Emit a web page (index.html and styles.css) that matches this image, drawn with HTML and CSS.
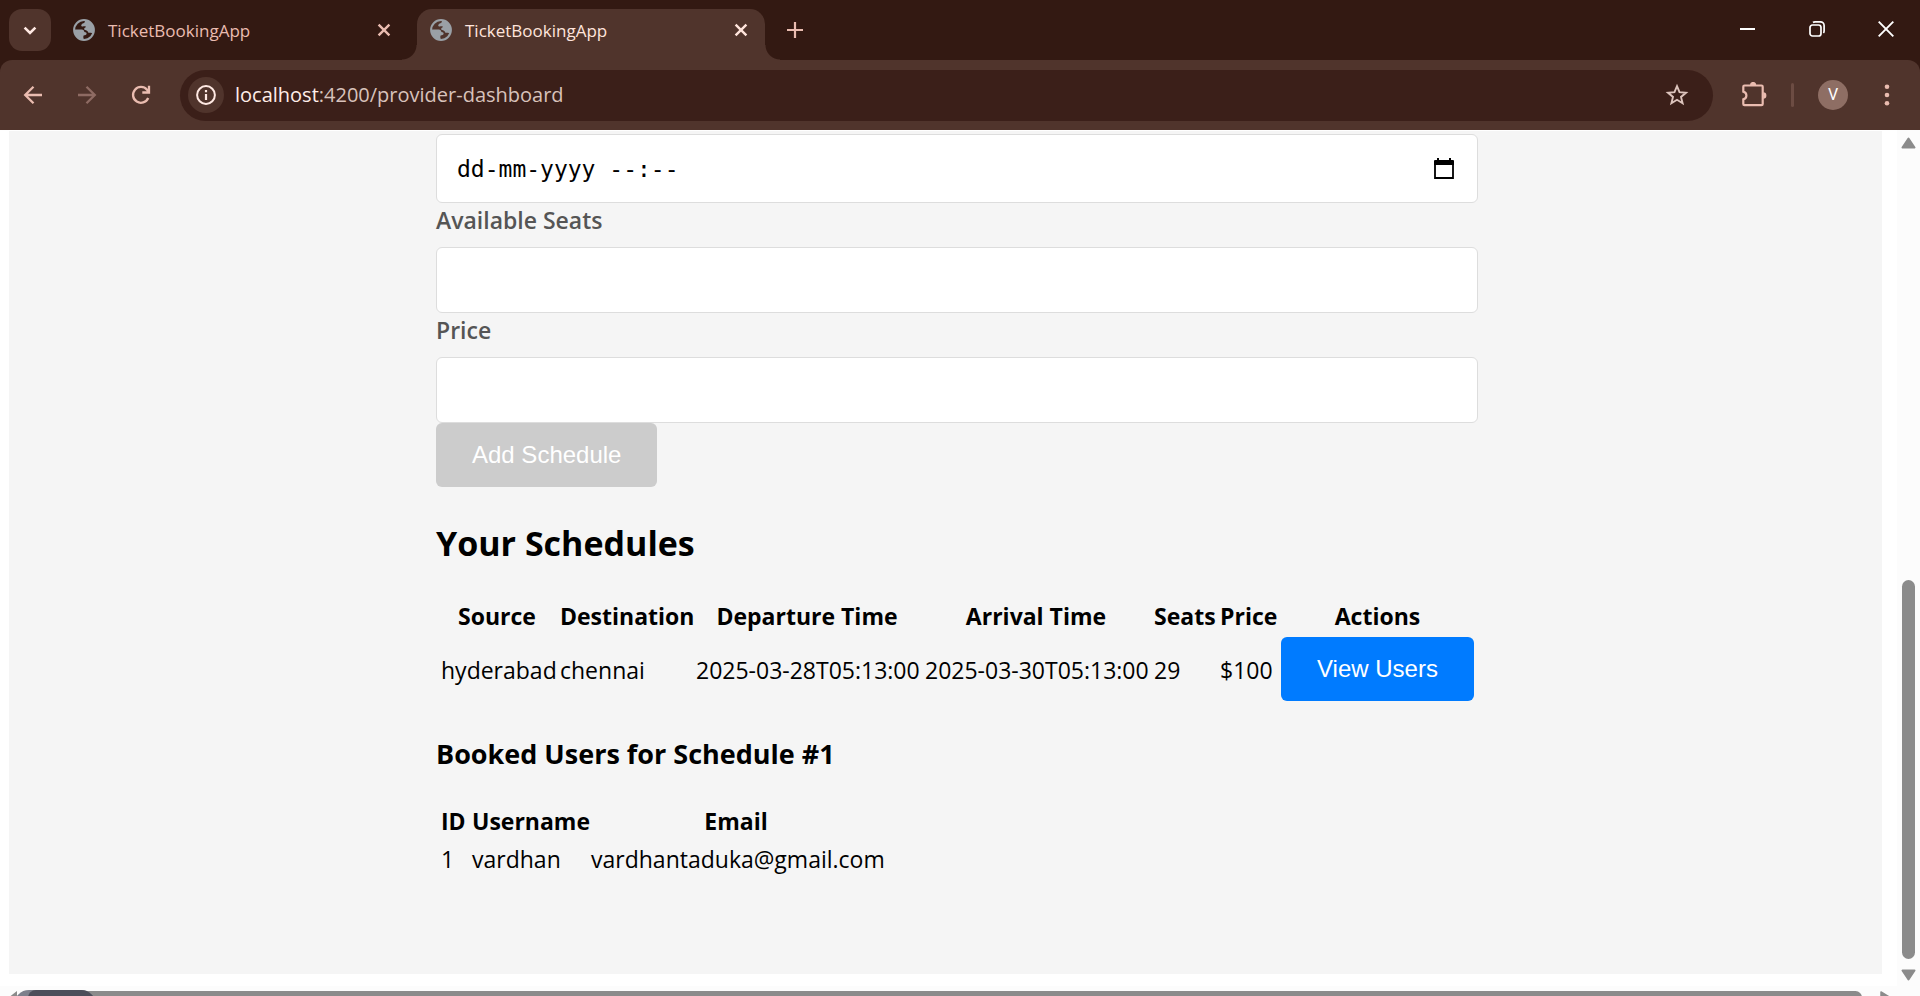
FILE: index.html
```html
<!DOCTYPE html>
<html lang="en">
<head>
<meta charset="utf-8">
<title>TicketBookingApp</title>
<link rel="stylesheet" href="styles.css">
</head>
<body>
<svg class="defs" aria-hidden="true">
  <symbol id="globe" viewBox="0 0 22 22">
    <circle cx="11" cy="11" r="9.9" fill="none" stroke="#9aa0a6" stroke-width="2"/>
    <path fill="#9aa0a6" d="M12 1.2C17.500 1.500 21 6 21 11c0 1.500-.4 3-1 4.200-.8-1-1.700-1.400-3-1.400h-1.600c-.4-1.300-1-2-2.400-2.600l-1.600-.4c-.6-1 0-2.200 1.200-2.500.3-.1.400-.6 0-.9-1.200-.2-2.600.2-3.600 0C7.900 7.100 8 5.700 9 4.900c.8-.7 2-.4 2.500-1.300.4-.8.5-1.600.5-2.400z"/>
    <path fill="#9aa0a6" d="M1.500 10.600h7.200c1.700 0 2.500 1 2.700 2.400 1.500.1 2.300.6 2.200 1.800-.1 1.400-1.600 1.500-3 1.700-.5 1.200-.3 2.600.4 4.300C5.600 20.800 1.300 16.500 1.500 10.600z"/>
  </symbol>
  <symbol id="cross" viewBox="0 0 14 14">
    <path d="M1.600 1.600l10.800 10.800M12.400 1.600L1.600 12.400" fill="none" stroke="currentColor" stroke-width="2.400"/>
  </symbol>
</svg>

<header class="browser">
  <div class="tabstrip">
    <button class="tab-search" aria-label="Search tabs">
      <svg width="14" height="9" viewBox="0 0 14 9"><path d="M1.600 1.600L7 7l5.400-5.400" fill="none" stroke="currentColor" stroke-width="2.600"/></svg>
    </button>
    <div class="tab">
      <svg class="favicon"><use href="#globe"/></svg>
      <span class="tab-title">TicketBookingApp</span>
      <button class="icon-button" aria-label="Close tab"><svg width="14" height="14"><use href="#cross"/></svg></button>
    </div>
    <div class="tab tab-active">
      <svg class="favicon"><use href="#globe"/></svg>
      <span class="tab-title">TicketBookingApp</span>
      <button class="icon-button" aria-label="Close tab"><svg width="14" height="14"><use href="#cross"/></svg></button>
    </div>
    <button class="icon-button new-tab" aria-label="New tab">
      <svg width="16" height="16" viewBox="0 0 16 16"><path d="M8 0v16M0 8h16" fill="none" stroke="currentColor" stroke-width="2.200"/></svg>
    </button>
    <div class="window-controls">
      <button class="window-button" aria-label="Minimize"><svg width="16" height="16" viewBox="0 0 16 16"><path d="M0 8h15" stroke="currentColor" stroke-width="2"/></svg></button>
      <button class="window-button" aria-label="Restore"><svg width="16" height="16" viewBox="0 0 16 16" fill="none" stroke="currentColor" stroke-width="1.700"><rect x="1" y="4" width="11" height="11" rx="2.500"/><path d="M4 1.500C4.600 1 5.300.9 6 .9h5.500a3.600 3.600 0 0 1 3.600 3.600V10c0 .8-.2 1.500-.7 2"/></svg></button>
      <button class="window-button" aria-label="Close"><svg width="16" height="16" viewBox="0 0 16 16"><path d="M.7.7l14.600 14.600M15.300.7L.7 15.300" stroke="currentColor" stroke-width="1.900"/></svg></button>
    </div>
  </div>

  <div class="toolbar">
    <nav class="nav-buttons">
      <button class="nav-button" aria-label="Back"><svg width="20" height="20" viewBox="0 0 20 20"><path d="M19 10H2.500M10.500 1.700L2.200 10l8.300 8.300" fill="none" stroke="currentColor" stroke-width="2.300"/></svg></button>
      <button class="nav-button nav-muted" aria-label="Forward"><svg width="20" height="20" viewBox="0 0 20 20"><path d="M1 10h16.500M9.500 1.700l8.300 8.300-8.300 8.300" fill="none" stroke="currentColor" stroke-width="2.300"/></svg></button>
      <button class="nav-button" aria-label="Reload"><svg width="20" height="20" viewBox="0 0 20 20"><path d="M17.200 13A7.900 7.900 0 1 1 16 4.800L18 7M18 .8v6.700h-6.700" fill="none" stroke="currentColor" stroke-width="2.300"/></svg></button>
    </nav>
    <div class="omnibox">
      <button class="site-info" aria-label="View site information">
        <svg width="20" height="20" viewBox="0 0 20 20"><circle cx="10" cy="10" r="8.900" fill="none" stroke="currentColor" stroke-width="2"/><path d="M10 9v6M10 5v2.200" stroke="currentColor" stroke-width="2.200"/></svg>
      </button>
      <div class="url"><span class="url-host">localhost</span>:4200/provider-dashboard</div>
      <button class="icon-button bookmark" aria-label="Bookmark this tab">
        <svg width="24" height="24" viewBox="0 0 24 24"><path d="M12 3.200l2.500 6 6.500.5-5 4.200 1.600 6.400-5.600-3.500-5.600 3.500L8 13.900 3 9.700l6.500-.5z" fill="none" stroke="currentColor" stroke-width="1.900"/></svg>
      </button>
    </div>
    <div class="toolbar-actions">
      <button class="icon-button" aria-label="Extensions">
        <svg width="26" height="26" viewBox="0 0 26 26"><path d="M3.500 3.500h17a1.200 1.200 0 0 1 1.200 1.200V22a1.200 1.200 0 0 1-1.200 1.200h-17A1.200 1.200 0 0 1 2.300 22v-4.600c2-.6 3.100-2 3.100-3.900s-1.100-3.400-3.100-3.900V4.700a1.200 1.200 0 0 1 1.200-1.200z" fill="none" stroke="currentColor" stroke-width="2.200"/><path d="M9 3a3.100 3.100 0 0 1 6.200 0zM22.200 10.300a3.200 3.200 0 0 1 0 6.400z" fill="currentColor"/></svg>
      </button>
      <span class="divider"></span>
      <button class="avatar" aria-label="Profile V">V</button>
      <button class="icon-button" aria-label="Menu">
        <svg width="6" height="22" viewBox="0 0 6 22" fill="currentColor"><circle cx="3" cy="2.700" r="2.300"/><circle cx="3" cy="11" r="2.300"/><circle cx="3" cy="19.300" r="2.300"/></svg>
      </button>
    </div>
  </div>
</header>

<div class="viewport">
  <main class="page">
    <div class="dashboard">
      <form class="schedule-form">
        <div class="date-field">
          <input class="date-input" type="text" placeholder="dd-mm-yyyy --:--" aria-label="Arrival Time">
          <button class="date-picker" type="button" aria-label="Open calendar">
            <svg width="20" height="22" viewBox="0 0 20 22"><path d="M1 4h18v16H1z" fill="none" stroke="#000" stroke-width="1.800"/><path d="M0 3a1 1 0 0 1 1-1h18a1 1 0 0 1 1 1v4H0zM3 0h2v3H3zM15 0h2v3h-2z"/></svg>
          </button>
        </div>
        <label class="field-label" for="seats">Available Seats</label>
        <input class="field" id="seats" type="text">
        <label class="field-label" for="price">Price</label>
        <input class="field" id="price" type="text">
        <button class="button" type="submit" disabled>Add Schedule</button>
      </form>

      <h2 class="section-title">Your Schedules</h2>
      <table class="schedules">
        <colgroup><col class="col-source"><col class="col-destination"><col class="col-time"><col class="col-time"><col class="col-seats"><col class="col-price"><col></colgroup>
        <thead>
          <tr><th>Source</th><th>Destination</th><th>Departure Time</th><th>Arrival Time</th><th>Seats</th><th>Price</th><th>Actions</th></tr>
        </thead>
        <tbody>
          <tr><td>hyderabad</td><td>chennai</td><td>2025-03-28T05:13:00</td><td>2025-03-30T05:13:00</td><td>29</td><td>$100</td><td><button class="button" type="button">View Users</button></td></tr>
        </tbody>
      </table>

      <h3 class="subsection-title">Booked Users for Schedule #1</h3>
      <table class="users">
        <colgroup><col class="col-id"><col class="col-username"><col class="col-email"></colgroup>
        <thead><tr><th>ID</th><th>Username</th><th>Email</th></tr></thead>
        <tbody><tr><td>1</td><td>vardhan</td><td>vardhantaduka@gmail.com</td></tr></tbody>
      </table>
    </div>
  </main>

  <div class="scroll-vertical">
    <svg width="15" height="12" viewBox="0 0 15 12"><path d="M7.500 1.500L13.500 10.500h-12z" fill="#8b8b8b" stroke="#8b8b8b" stroke-width="2" stroke-linejoin="round"/></svg>
    <div class="scroll-track"><div class="scroll-thumb"></div></div>
    <svg width="15" height="12" viewBox="0 0 15 12"><path d="M7.500 10.500L1.500 1.500h12z" fill="#8b8b8b" stroke="#8b8b8b" stroke-width="2" stroke-linejoin="round"/></svg>
  </div>
  <div class="scroll-horizontal">
    <svg width="9" height="14" viewBox="0 0 9 14"><path d="M9 0v14L0 7z" fill="#8b8b8b"/></svg>
    <div class="scroll-bar"></div>
    <svg width="12" height="14" viewBox="0 0 12 14"><path d="M1 1l10 6-10 6z" fill="#8b8b8b" stroke="#8b8b8b" stroke-width="1.500" stroke-linejoin="round"/></svg>
    <div class="status-pill"><div class="status-pill-inner"></div></div>
  </div>
</div>
</body>
</html>
```
FILE: styles.css
```css
* {
  box-sizing: border-box;
}

body {
  margin: 0;
  height: 100vh;
  display: flex;
  flex-direction: column;
  overflow: hidden;
  background: #fff;
  color: #000;
  font-family: "Open Sans", "Noto Sans", sans-serif;
  font-size: 23px;
  line-height: 32px;
}

button {
  padding: 0;
  border: 0;
  background: none;
  color: inherit;
  font: inherit;
}

svg {
  display: block;
  flex: none;
}

.defs {
  position: absolute;
  width: 0;
  height: 0;
}

/* Browser frame */

.browser {
  flex: none;
  background: #331912;
  color: #eabcb0;
}

.tabstrip {
  display: flex;
  height: 60px;
  padding: 9px 0 0 9px;
}

.tab-search {
  display: grid;
  place-items: center;
  width: 42px;
  height: 42px;
  margin-right: 8px;
  border-radius: 13px;
  background: #50342c;
  color: #ffe9e3;
}

.tab {
  position: relative;
  display: flex;
  align-items: center;
  width: 348px;
  padding: 0 17px 9px 13px;
  border-radius: 15px 15px 0 0;
}

.tab:first-of-type {
  margin-left: 1px;
  margin-right: 9px;
}

.tab-active {
  background: #50342c;
  color: #ffe4dc;
}

.tab-active::before,
.tab-active::after {
  content: "";
  position: absolute;
  bottom: 0;
  width: 15px;
  height: 15px;
}

.tab-active::before {
  right: 100%;
  background: radial-gradient(circle at 0 0, #331912 14px, #50342c 15px);
}

.tab-active::after {
  left: 100%;
  background: radial-gradient(circle at 100% 0, #331912 14px, #50342c 15px);
}

.favicon {
  width: 22px;
  height: 22px;
}

.tab-title {
  flex: 1;
  padding: 2px 0 0 13px;
  font-size: 17px;
}

.icon-button {
  display: grid;
  place-items: center;
}

.new-tab {
  width: 60px;
  height: 42px;
}

.window-controls {
  display: flex;
  height: 42px;
  margin-left: auto;
  color: #fff;
}

.window-button {
  display: grid;
  place-items: center;
  width: 69px;
  height: 40px;
}

.toolbar {
  display: flex;
  align-items: center;
  height: 70px;
  padding: 0 30px 0 6px;
  border-radius: 12px 12px 0 0;
  background: #50342c;
}

.nav-buttons {
  display: flex;
  width: 174px;
}

.nav-button {
  display: grid;
  place-items: center;
  width: 54px;
  height: 42px;
}

.nav-muted {
  color: #8e6b63;
}

.omnibox {
  flex: 1;
  display: flex;
  align-items: center;
  height: 51px;
  padding: 0 24px 0 8px;
  border-radius: 26px;
  background: #3b1f19;
}

.site-info {
  display: grid;
  place-items: center;
  width: 36px;
  height: 36px;
  border-radius: 50%;
  background: #50342c;
  color: #ffe9e3;
}

.url {
  flex: 1;
  padding-left: 11px;
  color: #d8c2bb;
  font-size: 20px;
}

.url-host {
  color: #ffede8;
}

.bookmark {
  color: #dcc3bc;
}

.toolbar-actions {
  display: flex;
  align-items: center;
  padding-left: 28px;
}

.divider {
  width: 3px;
  height: 24px;
  margin: 0 24px;
  border-radius: 2px;
  background: #6c4c43;
}

.avatar {
  width: 30px;
  height: 30px;
  margin-right: 36px;
  border-radius: 50%;
  background: #8e6e64;
  color: #fff;
  font-family: Roboto, sans-serif;
  font-size: 16px;
  line-height: 30px;
}

/* Page viewport */

.viewport {
  flex: 1;
  min-height: 0;
  display: grid;
  grid-template-columns: 1fr 23px;
  grid-template-rows: 1fr 10px;
}

.page {
  min-height: 0;
  margin: 1px 15px 12px 9px;
  padding: 3px 0 0 23px;
  background: #f5f5f5;
}

.dashboard {
  max-width: 1042px;
  margin: 0 auto;
}

.schedule-form {
  display: flex;
  flex-direction: column;
  align-items: stretch;
}

.date-field {
  position: relative;
}

.date-input,
.field {
  display: block;
  width: 100%;
  border: 1px solid #ddd;
  border-radius: 6px;
  background: #fff;
  color: #000;
}

.date-input {
  height: 69px;
  padding: 0 60px 0 20px;
  font-family: "DejaVu Sans Mono", monospace;
  font-size: 23px;
}

.date-input::placeholder {
  color: #000;
  opacity: 1;
}

.date-picker {
  position: absolute;
  top: 24px;
  right: 24px;
}

.field {
  height: 66px;
  padding: 0 18px;
  font: inherit;
}

.field-label {
  padding-top: 1px;
  margin-bottom: 11px;
  color: #555;
  font-weight: 600;
}

.button {
  align-self: flex-start;
  display: block;
  padding: 18px 36px;
  border-radius: 6px;
  background: #007bff;
  color: #fff;
  font-family: "Liberation Sans", Arial, sans-serif;
  font-size: 24px;
  line-height: 28px;
  white-space: nowrap;
}

.button:disabled {
  background: #ccc;
}

.section-title {
  margin: 32px 0 28px;
  font-size: 34px;
  line-height: 48px;
}

.subsection-title {
  margin: 29px 0 28px;
  font-size: 27px;
  line-height: 37px;
}

table {
  table-layout: fixed;
  border-spacing: 3px;
  white-space: nowrap;
}

th,
td {
  padding: 1px 2px;
}

th {
  height: 35px;
}

td {
  height: 35px;
  text-align: left;
}

.schedules {
  width: 100%;
}

.schedules td {
  height: 67px;
}

.schedules td:last-child {
  padding: 0 0 2px 1px;
}

.col-source {
  width: 116px;
}

.col-destination {
  width: 133px;
}

.col-time {
  width: 226px;
}

.col-seats {
  width: 63px;
}

.col-price {
  width: 59px;
}

.users {
  width: 450px;
}

.col-id {
  width: 28px;
}

.col-username {
  width: 116px;
}

/* Scroll bars */

.scroll-vertical {
  display: flex;
  flex-direction: column;
  align-items: center;
  padding: 7px 0 5px;
  background: #fcfcfc;
}

.scroll-track {
  flex: 1;
  display: flex;
  flex-direction: column;
  padding: 10px 0;
}

.scroll-track::before {
  content: "";
  flex: 10;
}

.scroll-thumb {
  flex: 9;
  width: 13px;
  border-radius: 7px;
  background: #8b8b8b;
}

.scroll-horizontal {
  position: relative;
  grid-column: 1 / -1;
  display: flex;
  align-items: flex-start;
  gap: 18px;
  padding: 5px 28px 0 8px;
  overflow: hidden;
  background: #fcfcfc;
}

.scroll-bar {
  flex: 1;
  height: 13px;
  border-radius: 7px;
  background: #8b8b8b;
}

.status-pill {
  position: absolute;
  top: 4px;
  left: 14px;
  width: 82px;
  height: 30px;
  padding-left: 14px;
  border-radius: 15px;
  background: #7d808c;
}

.status-pill-inner {
  height: 30px;
  border-radius: 8px 15px 15px 8px;
  background: #4c4e5a;
}
```
